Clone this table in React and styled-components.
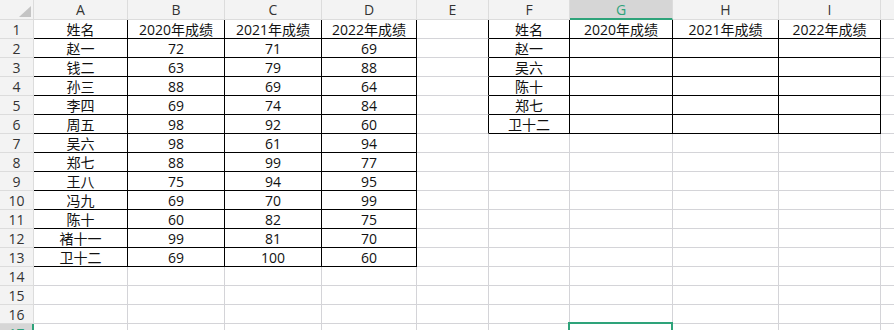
import styled, { createGlobalStyle } from "styled-components"

const GlobalStyle = createGlobalStyle`
  html, body {
    margin: 0;
    padding: 0;
    background: #ffffff;
  }
  body {
    font-family: "Open Sans", "Noto Sans CJK SC", "Noto Sans", sans-serif;
    overflow: hidden;
  }
`

const COLS = ["A", "B", "C", "D", "E", "F", "G", "H", "I", "J"]
const ACTIVE_COL = "G"
const ACTIVE_ROW = 17
const ROW_COUNT = 17

const GRID = "#d4d4d8"
const HEAD_LINE = "#dcdcdc"
const GREEN = "#2ea37a"

const left = [
  ["姓名", "2020年成绩", "2021年成绩", "2022年成绩"],
  ["赵一", 72, 71, 69],
  ["钱二", 63, 79, 88],
  ["孙三", 88, 69, 64],
  ["李四", 69, 74, 84],
  ["周五", 98, 92, 60],
  ["吴六", 98, 61, 94],
  ["郑七", 88, 99, 77],
  ["王八", 75, 94, 95],
  ["冯九", 69, 70, 99],
  ["陈十", 60, 82, 75],
  ["褚十一", 99, 81, 70],
  ["卫十二", 69, 100, 60],
]

const right = [
  ["姓名", "2020年成绩", "2021年成绩", "2022年成绩"],
  ["赵一", "", "", ""],
  ["吴六", "", "", ""],
  ["陈十", "", "", ""],
  ["郑七", "", "", ""],
  ["卫十二", "", "", ""],
]

const Sheet = styled.div`
  display: grid;
  grid-template-columns: 34px 94px 97px 97px 95px 72px 81px 103px 106px 102px 100px;
  grid-auto-rows: 19px;
  grid-template-rows: 20px;
  width: 894px;
  height: 330px;
  overflow: hidden;
  font-size: 14px;
  color: #111;
`

const Corner = styled.div`
  position: relative;
  background: #f3f3f3;
  border-right: 1px solid ${HEAD_LINE};
  border-bottom: 1px solid ${HEAD_LINE};

  &::after {
    content: "";
    position: absolute;
    right: 2px;
    bottom: 2px;
    width: 0;
    height: 0;
    border-left: 12px solid transparent;
    border-bottom: 11px solid #c4c4c4;
  }
`

const ColHeader = styled.div`
  box-sizing: border-box;
  display: flex;
  align-items: center;
  justify-content: center;
  line-height: 19px;
  background: ${(p) => (p.$active ? "#d6d6d6" : "#f3f3f3")};
  color: ${(p) => (p.$active ? GREEN : "#333")};
  border-right: 1px solid ${HEAD_LINE};
  border-bottom: ${(p) => (p.$active ? `2px solid ${GREEN}` : `1px solid ${HEAD_LINE}`)};
  padding-top: ${(p) => (p.$active ? "1px" : "0")};
`

const RowHeader = styled.div`
  box-sizing: border-box;
  display: flex;
  align-items: center;
  justify-content: center;
  line-height: 19px;
  background: ${(p) => (p.$active ? "#d6d6d6" : "#f3f3f3")};
  color: ${(p) => (p.$active ? GREEN : "#333")};
  border-bottom: 1px solid ${HEAD_LINE};
  border-right: ${(p) => (p.$active ? `2px solid ${GREEN}` : `1px solid ${HEAD_LINE}`)};
  padding-left: ${(p) => (p.$active ? "1px" : "0")};
`

const Cell = styled.div`
  position: relative;
  box-sizing: border-box;
  display: flex;
  align-items: center;
  justify-content: center;
  line-height: 19px;
  white-space: nowrap;
  border-right: 1px solid ${(p) => (p.$br ? "#000" : GRID)};
  border-bottom: 1px solid ${(p) => (p.$bb ? "#000" : GRID)};

  &::after {
    content: "";
    display: ${(p) => (p.$selected ? "block" : "none")};
    position: absolute;
    left: -2px;
    top: -2px;
    right: -1px;
    bottom: -1px;
    border: 2px solid ${GREEN};
    z-index: 2;
  }
`

// which cell carries text and black borders
function cellInfo(row, col) {
  const c = COLS.indexOf(col)
  let text = ""
  let br = false
  let bb = false

  // left table A1:D13
  if (row >= 1 && row <= 13 && c >= 0 && c <= 3) {
    text = left[row - 1][c]
    br = true
    bb = true
  }
  // right table F1:I6
  if (row >= 1 && row <= 6 && c >= 5 && c <= 8) {
    text = right[row - 1][c - 5]
    br = true
    bb = true
  }
  // left edge of right table
  if (row >= 1 && row <= 6 && col === "E") br = true

  return { text, br, bb }
}

function App() {
  const rows = Array.from({ length: ROW_COUNT }, (_, i) => i + 1)

  return (
    <>
      <GlobalStyle />
      <Sheet>
        <Corner />
        {COLS.map((col) => (
          <ColHeader key={col} $active={col === ACTIVE_COL}>
            {col}
          </ColHeader>
        ))}
        {rows.map((row) => (
          <Row key={row} row={row} />
        ))}
      </Sheet>
    </>
  )
}

function Row({ row }) {
  return (
    <>
      <RowHeader $active={row === ACTIVE_ROW}>{row}</RowHeader>
      {COLS.map((col) => {
        const { text, br, bb } = cellInfo(row, col)
        return (
          <Cell
            key={col}
            $br={br}
            $bb={bb}
            $selected={row === ACTIVE_ROW && col === ACTIVE_COL}
          >
            {text}
          </Cell>
        )
      })}
    </>
  )
}

export default App
